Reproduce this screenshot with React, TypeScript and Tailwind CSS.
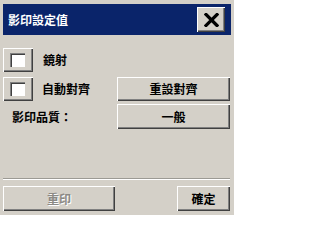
const FONT = "font-['Noto_Sans_CJK_TC','Noto_Sans_CJK_SC',sans-serif]";
const RAISED =
  'bg-[#d4d0c8] shadow-[inset_1px_1px_0_#ffffff,inset_-1px_-1px_0_#404040,inset_-2px_-2px_0_#808080]';

function CheckBox() {
  return (
    <div className={`flex h-[24px] w-[30px] items-start pl-[7px] pt-[5px] ${RAISED}`}>
      <div className="h-[14px] w-[15px] bg-white shadow-[inset_1px_1px_0_#808080,inset_2px_2px_0_#404040,inset_-1px_-1px_0_#ffffff]" />
    </div>
  );
}

function Button({ label, className, disabled }: { label: string; className: string; disabled?: boolean }) {
  return (
    <div className={`flex items-center justify-center text-[12px] font-semibold ${RAISED} ${className}`}>
      {disabled ? (
        <span className="text-[#8c8a85] [text-shadow:1px_1px_0_#ffffff]">{label}</span>
      ) : (
        <span className="text-black">{label}</span>
      )}
    </div>
  );
}

export default function App() {
  return (
    <div className={`h-[215px] w-[234px] overflow-hidden bg-[#d4d0c8] px-[3px] pt-[4px] ${FONT}`}>
      {/* title bar */}
      <div className="flex h-[31px] w-[228px] items-center justify-between bg-[#0a246a] pl-[5px] pr-[6px]">
        <span className="text-[12px] font-bold text-white">影印設定值</span>
        <div className={`flex h-[25px] w-[28px] items-center justify-center ${RAISED}`}>
          <svg width="15" height="14" viewBox="0 0 15 14">
            <path d="M2 1.5 L13 12.5 M13 1.5 L2 12.5" stroke="#000" strokeWidth="3.2" strokeLinecap="square" />
          </svg>
        </div>
      </div>

      {/* options */}
      <div className="mt-[13px] flex h-[24px] items-center">
        <CheckBox />
        <span className="ml-[10px] text-[12px] font-semibold text-black">鏡射</span>
      </div>

      <div className="mt-[4px] flex h-[25px] items-center">
        <CheckBox />
        <span className="ml-[9px] text-[12px] font-semibold text-black">自動對齊</span>
        <Button label="重設對齊" className="ml-auto mr-[1px] h-[24px] w-[113px]" />
      </div>

      <div className="mt-[3px] flex h-[25px] items-center">
        <span className="ml-[9px] text-[12px] font-semibold text-black">影印品質：</span>
        <Button label="一般" className="ml-auto mr-[1px] h-[25px] w-[113px]" />
      </div>

      {/* separator */}
      <div className="mt-[49px] h-[2px] w-[227px] border-t border-b border-t-[#9c9a94] border-b-white" />

      {/* footer */}
      <div className="mt-[6px] flex items-center justify-between pr-[1px]">
        <Button label="重印" disabled className="h-[25px] w-[112px]" />
        <Button label="確定" className="h-[25px] w-[53px]" />
      </div>
    </div>
  );
}
